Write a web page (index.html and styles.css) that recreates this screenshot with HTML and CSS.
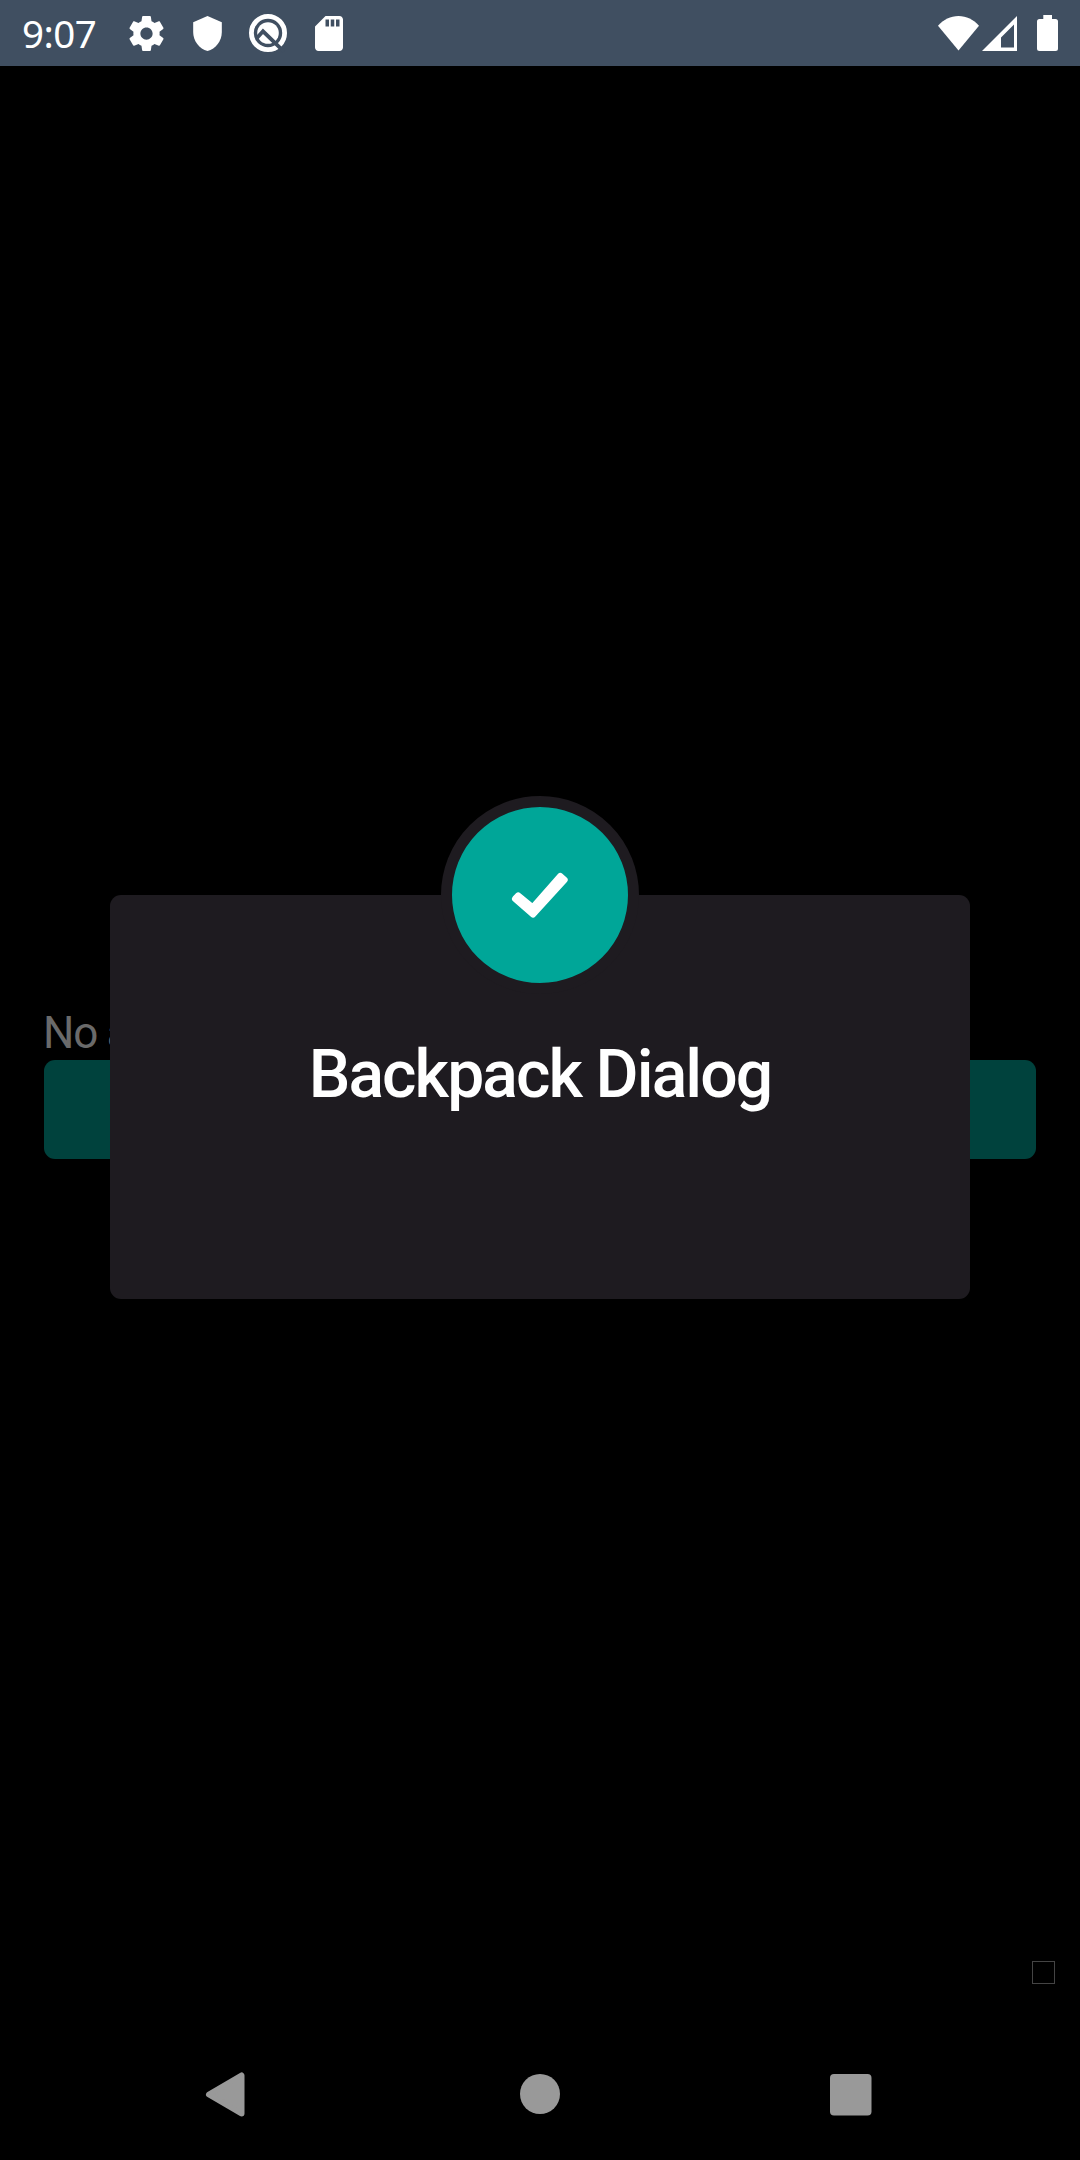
FILE: index.html
```html
<!DOCTYPE html>
<html lang="en">
<head>
<meta charset="utf-8">
<title>Backpack Dialog</title>
<link rel="stylesheet" href="styles.css">
</head>
<body>
<div class="screen">
  <header class="status-bar">
    <span class="clock">9:07</span>
    <div class="notifications">
      <svg class="icon-gear" viewBox="2 2 20 20"><path d="M19.43 12.98c.04-.32.07-.64.07-.98s-.03-.66-.07-.98l2.11-1.65c.19-.15.24-.42.12-.64l-2-3.46c-.12-.22-.39-.3-.61-.22l-2.49 1c-.52-.4-1.08-.73-1.69-.98l-.38-2.65C14.46 2.18 14.25 2 14 2h-4c-.25 0-.46.18-.49.42l-.38 2.65c-.61.25-1.17.59-1.69.98l-2.49-1c-.23-.09-.49 0-.61.22l-2 3.46c-.13.22-.07.49.12.64l2.11 1.65c-.04.32-.07.65-.07.98s.03.66.07.98l-2.11 1.65c-.19.15-.24.42-.12.64l2 3.46c.12.22.39.3.61.22l2.49-1c.52.4 1.08.73 1.69.98l.38 2.65c.03.24.24.42.49.42h4c.25 0 .46-.18.49-.42l.38-2.65c.61-.25 1.17-.59 1.69-.98l2.49 1c.23.09.49 0 .61-.22l2-3.46c.12-.22.07-.49-.12-.64l-2.11-1.65zM12 15.5c-1.93 0-3.5-1.57-3.5-3.5s1.57-3.5 3.5-3.5 3.5 1.57 3.5 3.5-1.57 3.5-3.5 3.5z"/></svg>
      <svg class="icon-shield" viewBox="3 1 18 22"><path d="M12 1L3 5v6c0 5.55 3.84 10.74 9 12 5.16-1.26 9-6.45 9-12V5l-9-4z"/></svg>
      <svg class="icon-q" viewBox="0 0 40 40">
        <circle class="ring" cx="20" cy="20" r="16.600"/>
        <circle cx="20" cy="20" r="10.800"/>
        <path class="slash" d="M8.500 25.500L15 18.300L36 38.600"/>
      </svg>
      <svg class="icon-sd" viewBox="4 2 16 20"><path d="M18 2h-8L4.02 8 4 20c0 1.1.9 2 2 2h12c1.1 0 2-.9 2-2V4c0-1.1-.9-2-2-2zm-6 6h-2V4h2v4zm3 0h-2V4h2v4zm3 0h-2V4h2v4z"/></svg>
    </div>
    <div class="system">
      <svg class="icon-wifi" viewBox="0 0 41 35"><path d="M20.5 34.6L0 9.7C5.600 3.600 12.500 0 20.500 0S35.400 3.600 41 9.700Z"/></svg>
      <svg class="icon-signal" viewBox="0 0 35 35"><path fill-rule="evenodd" d="M35 0V35H0ZM32 8.500L19 21.500V31.500H32Z"/></svg>
      <svg class="icon-battery" viewBox="0 0 21 36"><path d="M6.300 0H15V4H18.500Q21 4 21 6.500V33.500Q21 36 18.500 36H2.500Q0 36 0 33.500V6.500Q0 4 2.500 4H6.300Z"/></svg>
    </div>
  </header>
  <main class="content">
    <p class="message">No a</p>
    <div class="button"></div>
  </main>
  <div class="marker"></div>
  <nav class="nav-bar">
    <svg class="nav-icon" viewBox="0 0 46 46"><path class="back" d="M5 23.500L37.500 4.500V42.500Z"/></svg>
    <svg class="nav-icon" viewBox="0 0 46 46"><circle cx="23" cy="23" r="20"/></svg>
    <svg class="nav-icon" viewBox="0 0 46 46"><rect x="3" y="3" width="41.500" height="41.500" rx="4"/></svg>
  </nav>
  <section class="dialog">
    <div class="badge">
      <svg class="check" viewBox="0 0 56 44"><path d="M3.200 25.800L6.300 22.600L20.600 34.500L48.300 3.200L52.500 6.900L21 41.300Z"/></svg>
    </div>
    <h1 class="title">Backpack Dialog</h1>
  </section>
</div>
</body>
</html>
```
FILE: styles.css
```css
* { box-sizing: border-box; }
body { margin: 0; background: #000; }
svg { display: block; fill: #fff; flex: none; }
.screen {
  position: relative;
  display: flex;
  flex-direction: column;
  width: 1080px;
  height: 2160px;
  overflow: hidden;
  background: #000;
  font-family: Roboto, "Liberation Sans", sans-serif;
}
.status-bar {
  display: flex;
  align-items: center;
  height: 66px;
  padding: 0 22px;
  background: #404f61;
}
.clock {
  width: 107px;
  color: #fff;
  font: 38.5px/66px "Noto Sans", sans-serif;
  letter-spacing: -0.5px;
}
.notifications { display: flex; align-items: center; height: 66px; }
.icon-gear { width: 35px; height: 35px; }
.icon-shield { width: 29px; height: 35px; margin-left: 29px; }
.icon-q { width: 40px; height: 40px; margin-left: 26px; }
.icon-q .ring { fill: none; stroke: #fff; stroke-width: 4.8; }
.icon-q .slash { fill: none; stroke: #404f61; stroke-width: 3.8; }
.icon-sd { width: 28px; height: 35px; margin-left: 27px; }
.system { display: flex; align-items: center; margin-left: auto; }
.icon-wifi { width: 41px; height: 35px; }
.icon-signal { width: 35px; height: 35px; margin-left: 3px; }
.icon-battery { width: 21px; height: 36px; margin-left: 20px; }
.content {
  display: flex;
  flex: 1;
  flex-direction: column;
  padding: 941px 44px 0 43px;
}
.message {
  margin: 0;
  color: #6a6a6a;
  font-size: 44px;
  line-height: 52px;
  letter-spacing: -1.2px;
}
.button {
  height: 99px;
  margin: 1px 0 0 1px;
  border-radius: 11px;
  background: #00423d;
}
.marker {
  align-self: flex-end;
  width: 23px;
  height: 23px;
  margin: 0 25px 44px 0;
  border: 1px solid #444;
}
.nav-bar {
  display: flex;
  align-items: center;
  gap: 264px;
  height: 132px;
  padding-left: 207px;
}
.nav-icon { width: 46px; height: 46px; fill: #999; }
.nav-icon:first-child { margin: 0 3px 0 -3px; }
.back { stroke: #999; stroke-width: 6; stroke-linejoin: round; }
.dialog {
  position: absolute;
  top: 895px;
  left: 110px;
  display: flex;
  flex-direction: column;
  align-items: center;
  width: 860px;
  height: 404px;
  border-radius: 11px;
  background: #1e1b20;
}
.badge {
  display: flex;
  align-items: center;
  justify-content: center;
  width: 198px;
  height: 198px;
  margin-top: -99px;
  border: 11px solid #1e1b20;
  border-radius: 50%;
  background: #00a698;
}
.check {
  width: 56px;
  height: 44px;
  overflow: visible;
  stroke: #fff;
  stroke-width: 6.4;
  stroke-linejoin: round;
}
.title {
  margin: 42px 0 0;
  color: #fff;
  font-size: 66px;
  font-weight: 500;
  line-height: 78px;
  letter-spacing: -1.9px;
}
```
